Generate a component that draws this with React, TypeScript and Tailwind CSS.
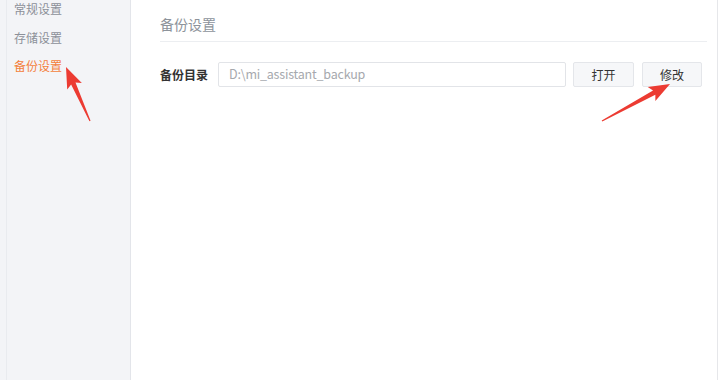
import React from "react";

const font = { fontFamily: '"Microsoft YaHei", "Noto Sans CJK SC", "Liberation Sans", sans-serif' };

function Arrow({ x1, y1, x2, y2 }: { x1: number; y1: number; x2: number; y2: number }) {
  const dx = x2 - x1, dy = y2 - y1;
  const len = Math.hypot(dx, dy);
  const ux = dx / len, uy = dy / len;
  const px = -uy, py = ux;
  const headLen = 18, headW = 8, shaftW = 2.4;
  const bx = x2 - ux * headLen, by = y2 - uy * headLen;
  const pts = [
    [x1 + px * 0.6, y1 + py * 0.6],
    [bx + px * shaftW, by + py * shaftW],
    [bx + px * headW - ux * 3, by + py * headW - uy * 3],
    [x2, y2],
    [bx - px * headW - ux * 3, by - py * headW - uy * 3],
    [bx - px * shaftW, by - py * shaftW],
    [x1 - px * 0.6, y1 - py * 0.6],
  ];
  return <polygon points={pts.map((p) => p.join(",")).join(" ")} fill="#ec3b32" />;
}

export default function App() {
  return (
    <div className="relative flex h-[380px] w-[720px] overflow-hidden bg-white" style={font}>
      <div className="h-full w-[131px] shrink-0 border-r border-[#e3e5ea] bg-[#f3f4f7] pl-[6px]">
        <div className="flex h-full flex-col border-l border-[#e9ebef] pl-[7px] pt-0 text-[12px]">
          <div className="mt-[1px] leading-[16px] text-[#8c9099]">常规设置</div>
          <div className="mt-[13px] leading-[16px] text-[#8c9099]">存储设置</div>
          <div className="mt-[12px] leading-[16px] text-[#f47f3b]">备份设置</div>
        </div>
      </div>
      <div className="flex h-full flex-1 flex-col border-r border-[#e6e7ea] pl-[29px] pr-[10px]">
        <div className="mt-[16px] text-[14px] leading-[16px] text-[#8d939b]">备份设置</div>
        <div className="mt-[9px] h-px bg-[#eceef1]" />
        <div className="mt-[20px] flex items-center">
          <div className="w-[58px] text-[12px] font-bold text-[#333]">备份目录</div>
          <div className="flex h-[25px] w-[348px] items-center rounded-[2px] border border-[#e2e4e8] pl-[10px] text-[12.5px] tracking-[-0.2px] text-[#a6a9ae]">
            D:\mi_assistant_backup
          </div>
          <button className="ml-[7px] h-[25px] w-[61px] rounded-[2px] border border-[#e4e6ea] bg-[#f6f7f9] text-[12px] text-[#333]">
            打开
          </button>
          <button className="ml-[8px] h-[25px] w-[60px] rounded-[2px] border border-[#e4e6ea] bg-[#f6f7f9] text-[12px] text-[#333]">
            修改
          </button>
        </div>
      </div>
      <div className="w-[2px] shrink-0 bg-white" />
      <svg className="pointer-events-none absolute left-0 top-0" width="720" height="380">
        <Arrow x1={90} y1={121} x2={66} y2={67} />
        <Arrow x1={602} y1={121} x2={670} y2={84} />
      </svg>
    </div>
  );
}
